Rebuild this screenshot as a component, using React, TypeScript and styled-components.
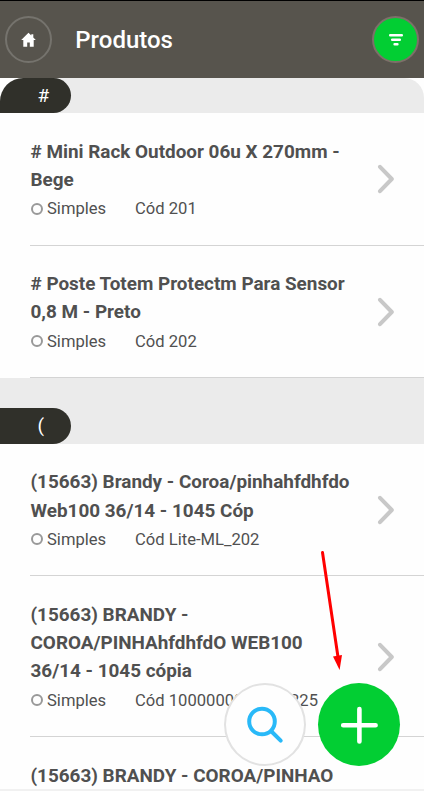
import React from "react";
import styled, { createGlobalStyle } from "styled-components";

const GlobalStyle = createGlobalStyle`
  * { box-sizing: border-box; }
  body { margin: 0; background: #fff; font-family: Roboto, sans-serif; color: #505050; overflow: hidden; }
`;

const Screen = styled.div`
  position: relative;
  display: flex;
  flex-direction: column;
  width: 424px;
  height: 791px;
  overflow: hidden;
  background: #fefefe;
`;

const Header = styled.header`
  display: flex;
  flex: none;
  align-items: center;
  height: 78px;
  padding: 0 5px;
  border-top: 1px solid #000;
  background: #57544d;
`;

const RoundButton = styled.button<{ $active?: boolean }>`
  display: flex;
  align-items: center;
  justify-content: center;
  width: 47px;
  height: 47px;
  padding: 0;
  border: 2px solid ${(p) => (p.$active ? "#7d7069" : "#75736d")};
  border-radius: 50%;
  background: ${(p) => (p.$active ? "#02ce33" : "transparent")};
`;

const Title = styled.h1`
  flex: 1;
  margin: 0 0 0 23.3px;
  color: #fff;
  font-size: 24px;
  line-height: 30px;
  font-weight: 500;
`;

const List = styled.main`
  flex: 1;
  min-height: 0;
  overflow: hidden;
`;

const SectionBar = styled.div<{ $first?: boolean }>`
  display: flex;
  align-items: flex-end;
  height: ${(p) => (p.$first ? "35px" : "65.5px")};
  border-radius: ${(p) => (p.$first ? "24px 20px 0 0" : "0")};
  background: #ebebeb;
`;

const SectionPill = styled.div<{ $first?: boolean }>`
  width: 71px;
  height: ${(p) => (p.$first ? "35px" : "36px")};
  padding-left: 37.4px;
  border-radius: ${(p) => (p.$first ? "24px 18px 18px 0" : "0 18px 18px 0")};
  background: #30302a;
  color: #fff;
  font-size: 19px;
  line-height: 36px;
`;

const Item = styled.article`
  display: flex;
  align-items: center;
  margin-left: 30px;
  padding: 24.6px 29px 21.4px 0.5px;
  border-bottom: 1px solid #d4d4d4;
`;

const ItemBody = styled.div`
  flex: 1;
  min-width: 0;
`;

const ItemTitle = styled.h2`
  margin: 0;
  font-size: 18.9px;
  line-height: 28.3px;
  font-weight: 700;
  white-space: pre;
`;

const Meta = styled.div`
  display: flex;
  align-items: center;
  height: 29px;
  font-size: 16.6px;
  white-space: nowrap;
`;

const Ring = styled.span`
  width: 12px;
  height: 12px;
  margin-right: 4.5px;
  border: 2px solid #999;
  border-radius: 50%;
`;

const Kind = styled.span`
  width: 88px;
`;

const ChevronIcon = styled.svg`
  flex: none;
  margin-bottom: 2px;
`;

const Actions = styled.div`
  position: absolute;
  right: 24px;
  bottom: 25px;
  display: flex;
  gap: 12px;
`;

const ActionButton = styled.button<{ $primary?: boolean }>`
  display: flex;
  align-items: center;
  justify-content: center;
  width: 82px;
  height: 83px;
  padding: 0;
  border: ${(p) => (p.$primary ? "none" : "2px solid #e2e2e2")};
  border-radius: 50%;
  background: ${(p) => (p.$primary ? "#02ce33" : "#fefefe")};
`;

const Pointer = styled.svg`
  position: absolute;
  left: 318px;
  top: 548px;
`;

const BottomEdge = styled.footer`
  flex: none;
  height: 2px;
  background: #f1f1f1;
`;

const Chevron = () => (
  <ChevronIcon width="18" height="30" viewBox="0 0 18 30" fill="none" stroke="#c8c8c8" strokeWidth="4" strokeLinecap="round" strokeLinejoin="round">
    <path d="M3 2.8 14.8 15 3 27.2" />
  </ChevronIcon>
);

type Product = { lines: string[]; code?: string };

const ProductItem = ({ lines, code }: Product) => (
  <Item>
    <ItemBody>
      <ItemTitle>{lines.join("\n")}</ItemTitle>
      {code && (
        <Meta>
          <Ring />
          <Kind>Simples</Kind>
          <span>Cód {code}</span>
        </Meta>
      )}
    </ItemBody>
    {code && <Chevron />}
  </Item>
);

const sections: { mark: string; products: Product[] }[] = [
  {
    mark: "#",
    products: [
      { lines: ["# Mini Rack Outdoor 06u X 270mm -", "Bege"], code: "201" },
      { lines: ["# Poste Totem Protectm Para Sensor", "0,8 M - Preto"], code: "202" },
    ],
  },
  {
    mark: "(",
    products: [
      { lines: ["(15663) Brandy - Coroa/pinhahfdhfdo", "Web100 36/14 - 1045 Cóp"], code: "Lite-ML_202" },
      { lines: ["(15663) BRANDY -", "COROA/PINHAhfdhfdO WEB100", "36/14 - 1045 cópia"], code: "1000000000000225" },
      { lines: ["(15663) BRANDY - COROA/PINHAO"] },
    ],
  },
];

export default function App() {
  return (
    <>
      <GlobalStyle />
      <Screen>
        <Header>
          <RoundButton aria-label="Início">
            <svg width="16" height="16" viewBox="0 0 16 16" fill="#fff">
              <path d="M7.5 .8 .2 8h2.1v6.8h3.9v-4.4h2.6v4.4h3.9V8h2.1L12.3 5.5V2.3h-2v1.2Z" />
            </svg>
          </RoundButton>
          <Title>Produtos</Title>
          <RoundButton $active aria-label="Filtrar">
            <svg width="16" height="14" viewBox="0 0 16 14" stroke="#fff" strokeWidth="2.5" strokeLinecap="round">
              <path d="M2.2 2.2h11.6M4.2 6.7h7.6M6.6 11.2h2.8" />
            </svg>
          </RoundButton>
        </Header>
        <List>
          {sections.map((s, i) => (
            <section key={s.mark}>
              <SectionBar $first={i === 0}>
                <SectionPill $first={i === 0}>{s.mark}</SectionPill>
              </SectionBar>
              {s.products.map((p) => (
                <ProductItem key={p.lines.join()} {...p} />
              ))}
            </section>
          ))}
        </List>
        <BottomEdge />
        <Actions>
          <ActionButton aria-label="Buscar">
            <svg width="40" height="40" viewBox="0 0 40 40" fill="none" stroke="#29b9f8" strokeWidth="4" strokeLinecap="round">
              <circle cx="17" cy="16.5" r="12.8" />
              <path d="m26.5 26.5 9.2 9.2" />
            </svg>
          </ActionButton>
          <ActionButton $primary aria-label="Adicionar">
            <svg width="38" height="38" viewBox="0 0 38 38" stroke="#fff" strokeWidth="4.6" strokeLinecap="round">
              <path d="M19.4 3v32.4M3.2 19.2h32.4" />
            </svg>
          </ActionButton>
        </Actions>
        <Pointer width="30" height="124" viewBox="0 0 30 124">
          <path d="M4.5 4.5 20 109" stroke="#f00" strokeWidth="3" strokeLinecap="round" />
          <path d="M15 108.5 24 107 21.6 122Z" fill="#f00" />
        </Pointer>
      </Screen>
    </>
  );
}
